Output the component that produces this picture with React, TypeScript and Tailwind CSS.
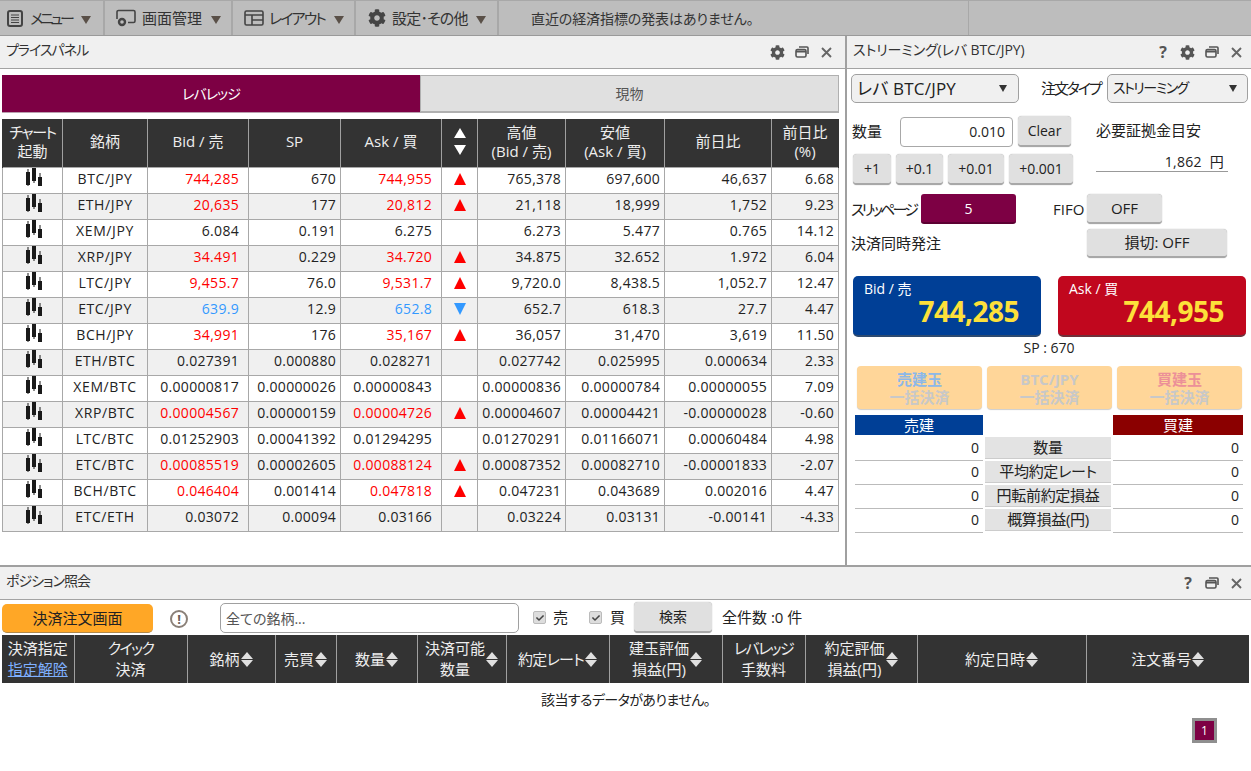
import { FaCog, FaCheck } from "react-icons/fa";

const rows = [
  ["BTC/JPY", "744,285", "670", "744,955", "up", "765,378", "697,600", "46,637", "6.68"],
  ["ETH/JPY", "20,635", "177", "20,812", "up", "21,118", "18,999", "1,752", "9.23"],
  ["XEM/JPY", "6.084", "0.191", "6.275", "", "6.273", "5.477", "0.765", "14.12"],
  ["XRP/JPY", "34.491", "0.229", "34.720", "up", "34.875", "32.652", "1.972", "6.04"],
  ["LTC/JPY", "9,455.7", "76.0", "9,531.7", "up", "9,720.0", "8,438.5", "1,052.7", "12.47"],
  ["ETC/JPY", "639.9", "12.9", "652.8", "down", "652.7", "618.3", "27.7", "4.47"],
  ["BCH/JPY", "34,991", "176", "35,167", "up", "36,057", "31,470", "3,619", "11.50"],
  ["ETH/BTC", "0.027391", "0.000880", "0.028271", "", "0.027742", "0.025995", "0.000634", "2.33"],
  ["XEM/BTC", "0.00000817", "0.00000026", "0.00000843", "", "0.00000836", "0.00000784", "0.00000055", "7.09"],
  ["XRP/BTC", "0.00004567", "0.00000159", "0.00004726", "up", "0.00004607", "0.00004421", "-0.00000028", "-0.60"],
  ["LTC/BTC", "0.01252903", "0.00041392", "0.01294295", "", "0.01270291", "0.01166071", "0.00060484", "4.98"],
  ["ETC/BTC", "0.00085519", "0.00002605", "0.00088124", "up", "0.00087352", "0.00082710", "-0.00001833", "-2.07"],
  ["BCH/BTC", "0.046404", "0.001414", "0.047818", "up", "0.047231", "0.043689", "0.002016", "4.47"],
  ["ETC/ETH", "0.03072", "0.00094", "0.03166", "", "0.03224", "0.03131", "-0.00141", "-4.33"],
];

const priceCols = ["w-[60px]", "w-[85px]", "w-[101px]", "w-[92px]", "w-[101px]", "w-[36px]", "w-[88px]", "w-[99px]", "w-[107px]", "w-[67px]"];
const posCols = ["w-[72px]", "w-[113px]", "w-[88px]", "w-[61px]", "w-[81px]", "w-[89px]", "w-[103px]", "w-[113px]", "w-[83px]", "w-[112px]", "w-[169px]", "w-[163px]"];

const cell = "border border-[#a8a8a8] p-0 pb-[3px] text-right pr-[4px]";
const wideCell = "border border-[#a8a8a8] p-0 pb-[3px] text-right pr-[9px]";

function Caret() {
  return <span className="inline-block w-0 h-0 border-x-[5px] border-x-transparent border-t-[8px] border-t-[#5a5048]" />;
}

function RestoreIcon() {
  return (
    <svg width="14" height="12" viewBox="0 0 14 12" fill="none" stroke="#555" strokeWidth="1.6">
      <rect x="1" y="3.5" width="10" height="7.5" rx="1.5" />
      <path d="M1 5.5h10" strokeWidth="2" />
      <path d="M4 1h8a1 1 0 0 1 1 1v6" />
    </svg>
  );
}

function CloseIcon() {
  return (
    <svg width="11" height="11" viewBox="0 0 11 11" stroke="#666" strokeWidth="1.9">
      <path d="M1 1l9 9M10 1l-9 9" />
    </svg>
  );
}

function Candles() {
  return (
    <svg width="18" height="18" viewBox="0 0 18 18" fill="#1a1a1a" className="inline-block">
      <rect x="1" y="4" width="4" height="13" />
      <rect x="2.5" y="1" width="1" height="17" />
      <rect x="7" y="0" width="4" height="13" />
      <rect x="8.5" y="0" width="1" height="15" />
      <rect x="13" y="9" width="4" height="9" />
      <rect x="14.5" y="5" width="1" height="13" />
    </svg>
  );
}

function PanelHeader({ title, help, gear, right, tight }: { title: string; help?: boolean; gear?: boolean; right: string; tight?: boolean }) {
  return (
    <div className={`h-[33px] shrink-0 bg-[#f0f0f0] border-b border-[#a3a3a3] flex items-center pl-[6px] text-[14px] text-[#333] ${right}`}>
      <span className={`-mt-[5px] ${tight ? "tracking-[-1px]" : "tracking-[-0.1px]"}`}>{title}</span>
      <div className="ml-auto flex items-center gap-[10px]">
        {help && <span className="text-[16px] leading-none font-bold text-[#555] mr-[3px]">?</span>}
        {gear && <FaCog size={15} color="#555" />}
        <RestoreIcon />
        <span className="ml-[2px]"><CloseIcon /></span>
      </div>
    </div>
  );
}

function GreyBtn({ className, children }: { className: string; children: React.ReactNode }) {
  return (
    <button className={`bg-[#e0e0e0] border-b-2 border-[#a8a8a8] rounded-[4px] text-[#222] flex items-center justify-center shadow-[0_0_1px_#999] ${className}`}>
      {children}
    </button>
  );
}

function Sort() {
  return (
    <span className="inline-flex flex-col gap-[1px] ml-[1px] align-middle">
      <span className="w-0 h-0 border-x-[6px] border-x-transparent border-b-[7px] border-b-[#e0e0e0]" />
      <span className="w-0 h-0 border-x-[6px] border-x-transparent border-t-[7px] border-t-[#e0e0e0]" />
    </span>
  );
}

function PositionHead({ lines, sort, tight }: { lines: string[]; sort?: boolean; tight?: string }) {
  return (
    <th className="border-l border-[#a0a0a0] first:border-l-0 font-normal p-0">
      <div className="flex items-center justify-center">
        <div className="leading-[21px]">
          {lines.map((l, i) => (
            <div key={l} className={i === 0 ? tight : ""}>{l}</div>
          ))}
        </div>
        {sort && <Sort />}
      </div>
    </th>
  );
}

function PriceTable() {
  return (
    <table className="w-[837px] table-fixed border-collapse text-[14px] text-[#222] mt-[6px]">
      <colgroup>
        {priceCols.map((w) => (
          <col key={w} className={w} />
        ))}
      </colgroup>
      <thead>
        <tr className="h-[48px] bg-[#333] text-[#eee] leading-[19px] text-[15px]">
          {[["チャート", "起動"], ["銘柄"], ["Bid / 売"], ["SP"], ["Ask / 買"], [], ["高値", "(Bid / 売)"], ["安値", "(Ask / 買)"], ["前日比"], ["前日比", "(%)"]].map((h, i) => (
            <th key={i} className="border-x border-[#a0a0a0] first:border-l-[#333] last:border-r-[#333] font-normal p-0 pb-[2px]">
              {i === 5 ? (
                <div className="flex flex-col items-center gap-[7px]">
                  <span className="w-0 h-0 border-x-[6px] border-x-transparent border-b-[10px] border-b-white" />
                  <span className="w-0 h-0 border-x-[6px] border-x-transparent border-t-[10px] border-t-white" />
                </div>
              ) : (
                h.map((l) => <div key={l} className={l === "チャート" ? "tracking-[-1.4px]" : ""}>{l}</div>)
              )}
            </th>
          ))}
        </tr>
      </thead>
      <tbody className="tracking-[0.3px]">
        {rows.map((r, i) => {
          const color = r[4] === "up" ? "text-[#ff0000]" : r[4] === "down" ? "text-[#3399ff]" : "";
          return (
            <tr key={r[0]} className={`h-[26px] ${i % 2 ? "bg-[#f0f0f0]" : "bg-white"}`}>
              <td className="border border-[#a8a8a8] text-center p-0 pb-[6px] pl-[3px] leading-none"><Candles /></td>
              <td className="border border-[#a8a8a8] text-center p-0 pb-[3px] tracking-[0.6px]">{r[0]}</td>
              <td className={`${wideCell} ${color}`}>{r[1]}</td>
              <td className={cell}>{r[2]}</td>
              <td className={`${wideCell} ${color}`}>{r[3]}</td>
              <td className="border border-[#a8a8a8] p-0 pb-[3px]">
                {r[4] === "up" && <div className="mx-auto w-0 h-0 border-x-[6.5px] border-x-transparent border-b-[12px] border-b-[#ff0000]" />}
                {r[4] === "down" && <div className="mx-auto w-0 h-0 border-x-[6.5px] border-x-transparent border-t-[12px] border-t-[#3399ff]" />}
              </td>
              <td className={cell}>{r[5]}</td>
              <td className={cell}>{r[6]}</td>
              <td className={cell}>{r[7]}</td>
              <td className={cell}>{r[8]}</td>
            </tr>
          );
        })}
      </tbody>
    </table>
  );
}

function StreamingPanel() {
  return (
    <div className="w-[404px] flex flex-col text-[15px] text-[#222]">
      <PanelHeader title="ストリーミング(レバ BTC/JPY)" help gear right="pr-[9px]" />
      <div className="flex flex-col pl-[4px]">
        {/* pair + order type */}
        <div className="flex items-center mt-[5px]">
          <div className="w-[168px] h-[29px] bg-[#f0f0f0] border border-[#a0a0a0] rounded-[5px] flex items-center px-[5px] text-[17px]">
            <span className="tracking-[0.2px]">レバ BTC/JPY</span>
            <span className="ml-auto mr-[6px] w-0 h-0 border-x-[4px] border-x-transparent border-t-[7px] border-t-[#333]" />
          </div>
          <span className="ml-[22px] w-[66px] whitespace-nowrap tracking-[-2.1px]">注文タイプ</span>
          <div className="w-[141px] h-[29px] bg-[#f0f0f0] border border-[#a0a0a0] rounded-[5px] flex items-center px-[5px] text-[14px]">
            <span className="-mt-[2px] tracking-[-1.5px]">ストリーミング</span>
            <span className="ml-auto mr-[5px] w-0 h-0 border-x-[4px] border-x-transparent border-t-[7px] border-t-[#333]" />
          </div>
        </div>
        {/* amount */}
        <div className="flex mt-[13px] text-[14px]">
          <div className="w-[227px]">
            <div className="flex items-center h-[31px]">
              <span className="ml-[1px] w-[48px] text-[15px]">数量</span>
              <div className="w-[113px] h-[30px] border border-[#a8a8a8] rounded-[4px] bg-white flex items-center justify-end pr-[7px]">0.010</div>
              <GreyBtn className="ml-[5px] w-[53px] h-[31px]">Clear</GreyBtn>
            </div>
            <div className="flex items-center gap-[5px] mt-[7px] ml-[2px]">
              <GreyBtn className="w-[38px] h-[31px]">+1</GreyBtn>
              <GreyBtn className="w-[47px] h-[31px]">+0.1</GreyBtn>
              <GreyBtn className="w-[56px] h-[31px]">+0.01</GreyBtn>
              <GreyBtn className="w-[64px] h-[31px]">+0.001</GreyBtn>
            </div>
          </div>
          <div className="ml-[18px] w-[132px]">
            <div className="h-[29px] flex items-center text-[15px]">必要証拠金目安</div>
            <div className="mt-[7px] h-[18px] border-b border-[#999] box-content flex items-center justify-end pr-[4px] pb-[1px] whitespace-pre tracking-[0.3px]">1,862  円</div>
          </div>
        </div>
        {/* slippage + fifo */}
        <div className="flex items-center mt-[9px] h-[30px]">
          <span className="w-[70px] whitespace-nowrap tracking-[-2.8px]">スリッページ</span>
          <div className="w-[95px] h-[30px] bg-[#7d0044] border-b-2 border-[#5c0032] rounded-[3px] text-white text-[14px] flex items-center justify-center">5</div>
          <span className="ml-[37px] w-[34px]">FIFO</span>
          <GreyBtn className="w-[75px] h-[30px]">OFF</GreyBtn>
        </div>
        <div className="flex items-center mt-[5px] h-[29px]">
          <span className="w-[236px]">決済同時発注</span>
          <GreyBtn className="w-[140px] h-[29px]">損切: OFF</GreyBtn>
        </div>
        {/* bid / ask */}
        <div className="flex ml-[2px] mt-[18px] gap-[17px]">
          <div className="w-[188px] h-[61px] rounded-[5px] bg-[#003f96] border-b-2 border-[#2d4a70] text-white pl-[11px] pt-[3px]">
            <div className="text-[14px] leading-[20px]">Bid / 売</div>
            <div className="text-right pr-[22px] text-[28px] leading-[30px] -mt-[3px] font-bold text-[#fde03a] tracking-[-0.5px]">744,285</div>
          </div>
          <div className="w-[188px] h-[61px] rounded-[5px] bg-[#c1071e] border-b-2 border-[#70303a] text-white pl-[11px] pt-[3px]">
            <div className="text-[14px] leading-[20px]">Ask / 買</div>
            <div className="text-right pr-[22px] text-[28px] leading-[30px] -mt-[3px] font-bold text-[#fde03a] tracking-[-0.5px]">744,955</div>
          </div>
        </div>
        <div className="text-center w-[396px] mt-[1px] h-[20px] leading-[20px] text-[14px]">SP : 670</div>
        {/* bulk close, disabled */}
        <div className="flex gap-[5px] ml-[6px] mt-[8px] font-bold leading-[18px] text-[15px] text-[#c8c8c8]">
          <div className="w-[125px] h-[43px] bg-[#ffd699] rounded-[4px] flex flex-col items-center justify-center shadow-[0_1px_1px_#ccc]">
            <span className="text-[#8cb8e8]">売建玉</span>
            <span>一括決済</span>
          </div>
          <div className="w-[125px] h-[43px] bg-[#ffd699] rounded-[4px] flex flex-col items-center justify-center shadow-[0_1px_1px_#ccc]">
            <span>BTC/JPY</span>
            <span>一括決済</span>
          </div>
          <div className="w-[125px] h-[43px] bg-[#ffd699] rounded-[4px] flex flex-col items-center justify-center shadow-[0_1px_1px_#ccc]">
            <span className="text-[#ec9098]">買建玉</span>
            <span>一括決済</span>
          </div>
        </div>
        {/* summary */}
        <div className="grid grid-cols-[128px_126px_130px] gap-x-[2px] ml-[4px] mt-[6px]">
          <div className="h-[20px] leading-[20px] bg-[#003f96] text-white text-center mb-[2px]">売建</div>
          <div />
          <div className="h-[20px] leading-[20px] bg-[#8b0000] text-white text-center mb-[2px]">買建</div>
          {["数量", "平均約定レート", "円転前約定損益", "概算損益(円)"].map((l) => (
            <div key={l} className="contents">
              <div className="h-[24px] border-b border-[#bbb] text-right pr-[4px] leading-[21px] text-[14px]">0</div>
              <div className="h-[24px] pb-[2px]"><div className="h-[22px] bg-[#e3e3e3] border-b border-[#ccc] text-center leading-[21px] whitespace-nowrap tracking-[-0.3px]">{l}</div></div>
              <div className="h-[24px] border-b border-[#bbb] text-right pr-[4px] leading-[21px] text-[14px]">0</div>
            </div>
          ))}
        </div>
      </div>
    </div>
  );
}

function PositionPanel() {
  const heads: { lines: string[]; sort?: boolean; tight?: string }[] = [
    { lines: ["クイック", "決済"], tight: "tracking-[-1.6px]" },
    { lines: ["銘柄"], sort: true },
    { lines: ["売買"], sort: true },
    { lines: ["数量"], sort: true },
    { lines: ["決済可能", "数量"], sort: true },
    { lines: ["約定レート"], sort: true, tight: "tracking-[-0.7px]" },
    { lines: ["建玉評価", "損益(円)"], sort: true },
    { lines: ["レバレッジ", "手数料"], tight: "tracking-[-1.6px]" },
    { lines: ["約定評価", "損益(円)"], sort: true },
    { lines: ["約定日時"], sort: true },
    { lines: ["注文番号"], sort: true },
  ];
  return (
    <div className="flex-1 flex flex-col border-t-2 border-[#a0a0a0] text-[15px] text-[#222] bg-white">
      <PanelHeader title="ポジション照会" help right="pr-[9px]" tight />
      <div className="flex items-center h-[35px] pl-[2px]">
        <button className="w-[151px] h-[29px] mt-[2px] bg-[#ffa726] border-b border-[#b0884a] rounded-[5px] text-[#222]">決済注文画面</button>
        <span className="ml-[17px] mt-[2px] w-[18px] h-[18px] rounded-full border-2 border-[#8a8078] text-[#6a6058] text-[13px] leading-[14px] font-bold text-center">!</span>
        <div className="ml-[32px] mt-[1px] w-[299px] h-[30px] border border-[#a0a0a0] rounded-[5px] bg-white flex items-center px-[5px] text-[14px] text-[#555]">全ての銘柄...</div>
        <span className="ml-[14px] w-[13px] h-[13px] rounded-[2px] bg-[#ddd] border border-[#bbb] flex items-center justify-center"><FaCheck size={8} color="#444" /></span>
        <span className="ml-[7px]">売</span>
        <span className="ml-[21px] w-[13px] h-[13px] rounded-[2px] bg-[#ddd] border border-[#bbb] flex items-center justify-center"><FaCheck size={8} color="#444" /></span>
        <span className="ml-[8px]">買</span>
        <GreyBtn className="ml-[9px] w-[78px] h-[31px] text-[14px]">検索</GreyBtn>
        <span className="ml-[10px] whitespace-pre">全件数 :0 件</span>
      </div>
      <div className="pl-[2px] pr-[2px]">
        <table className="w-[1247px] table-fixed border-collapse">
          <colgroup>
            {posCols.map((w, i) => (
              <col key={i} className={w} />
            ))}
          </colgroup>
          <thead>
            <tr className="h-[48px] bg-[#333] text-[#eee]">
              <th className="font-normal p-0 leading-[21px]">
                <div>決済指定</div>
                <div className="text-[#7fb0ff] underline">指定解除</div>
              </th>
              {heads.map((h) => (
                <PositionHead key={h.lines.join()} lines={h.lines} sort={h.sort} tight={h.tight} />
              ))}
            </tr>
          </thead>
          <tbody>
            <tr className="h-[35px]">
              <td colSpan={12} className="text-center p-0 pb-[2px] text-[14px] tracking-[-0.6px]">該当するデータがありません。</td>
            </tr>
          </tbody>
        </table>
        <div className="flex justify-end pr-[32px]">
          <div className="w-[25px] h-[25px] border-[3px] border-[#8f8f8f] bg-[#7d0044] text-white text-[12px] flex items-center justify-center">1</div>
        </div>
      </div>
    </div>
  );
}

export default function App() {
  return (
    <div className="w-[1251px] h-[771px] overflow-hidden flex flex-col bg-white font-['Open_Sans','Noto_Sans_CJK_JP',sans-serif] [font-feature-settings:'palt']">
      {/* top toolbar */}
      <div className="h-[36px] shrink-0 bg-[#bdbdbd] border-t border-[#a8a8a8] border-b border-b-[#9a9a9a] flex text-[15px] text-[#333] whitespace-nowrap">
        <div className="w-[105px] border-r-2 border-[#a8a8a8] flex items-center pl-[7px] gap-[7px]">
          <svg width="16" height="17" viewBox="0 0 16 17" fill="none" stroke="#444">
            <rect x="1" y="1" width="14" height="15" rx="2" strokeWidth="2" />
            <path d="M4 5h8M4 7.5h8M4 10h8M4 12.5h8" />
          </svg>
          <span className="tracking-[-3.2px]">メニュー</span>
          <span className="ml-[2px]"><Caret /></span>
        </div>
        <div className="w-[128px] border-r-2 border-[#a8a8a8] flex items-center pl-[11px] gap-[6px]">
          <svg width="20" height="18" viewBox="0 0 20 18" fill="none" stroke="#444" strokeWidth="1.6">
            <path d="M1 10V3a1.5 1.5 0 0 1 1.5-1.5h15A1.5 1.5 0 0 1 19 3v9a1.5 1.5 0 0 1-1.5 1.5H12" />
            <circle cx="6" cy="13" r="3" fill="#bdbdbd" strokeWidth="2.4" />
          </svg>
          <span>画面管理</span>
          <span className="ml-[3px]"><Caret /></span>
        </div>
        <div className="w-[123px] border-r-2 border-[#a8a8a8] flex items-center pl-[11px] gap-[5px]">
          <svg width="20" height="16" viewBox="0 0 20 16" fill="none" stroke="#444" strokeWidth="1.6">
            <rect x="1" y="1" width="18" height="14" rx="1.5" />
            <path d="M1 5h18M8 5v10M8 10h11" />
          </svg>
          <span className="tracking-[-1.9px]">レイアウト</span>
          <span className="ml-[4px]"><Caret /></span>
        </div>
        <div className="w-[143px] border-r-2 border-[#a8a8a8] flex items-center pl-[12px] gap-[6px]">
          <FaCog size={18} color="#444" />
          <span className="tracking-[-0.8px]">設定･その他</span>
          <span className="ml-[2px]"><Caret /></span>
        </div>
        <div className="w-[470px] border-r border-[#a8a8a8] flex items-center pl-[32px] text-[14px] tracking-[-0.1px]">直近の経済指標の発表はありません。</div>
      </div>

      <div className="flex h-[529px] shrink-0">
        {/* price panel */}
        <div className="w-[845px] flex flex-col">
          <PanelHeader title="プライスパネル" gear right="pr-[13px]" tight />
          <div className="pl-[2px] pt-[6px]">
            <div className="flex w-[837px] h-[38px] text-[14px]">
              <div className="w-[418px] bg-[#7d0044] text-white flex items-center justify-center border-b border-[#b9a0ae] tracking-[-1px]">レバレッジ</div>
              <div className="flex-1 bg-[#e0e0e0] border border-[#b0b0b0] border-b-2 text-[#555] flex items-center justify-center">現物</div>
            </div>
            <PriceTable />
          </div>
        </div>
        <div className="w-[2px] bg-[#a0a0a0]" />
        <StreamingPanel />
      </div>
      <PositionPanel />
    </div>
  );
}
